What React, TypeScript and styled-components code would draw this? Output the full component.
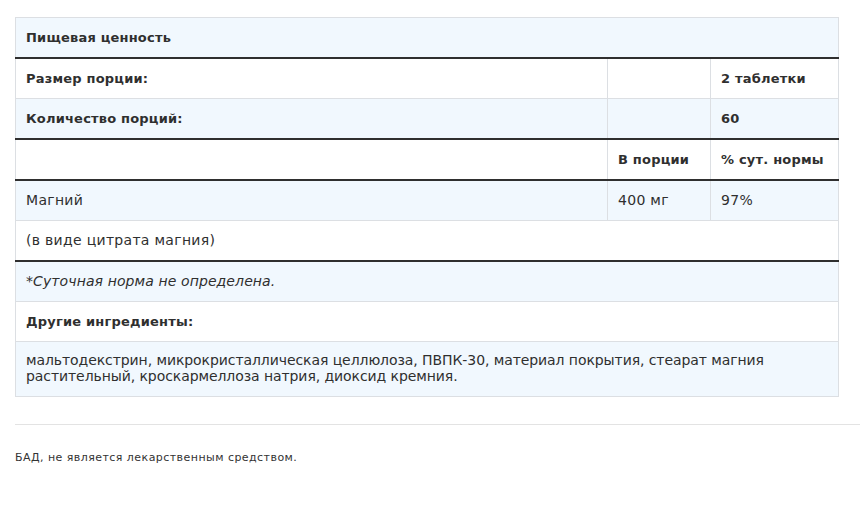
import React from "react";
import styled, { createGlobalStyle } from "styled-components";

const Global = createGlobalStyle`
  html, body { margin: 0; padding: 0; background: #fff; }
  body { font-family: "DejaVu Sans", "Open Sans", sans-serif; color: #2f2f2f; }
`;

const Page = styled.div`
  padding: 17px 0 0 15px;
`;

const Table = styled.table`
  width: 824px;
  border-collapse: collapse;
  border: 1px solid #dcdfe3;
  line-height: 19px;
`;

const Row = styled.tr<{ $blue?: boolean; $thick?: boolean }>`
  background: ${(p) => (p.$blue ? "#f1f8fe" : "#ffffff")};
  border-bottom: ${(p) => (p.$thick ? "2px solid #2f2f2f" : "1px solid #dcdfe3")};
`;

const Cell = styled.td<{ $bold?: boolean; $italic?: boolean; $w?: number }>`
  padding: 10px 10px 10px 10px;
  border-left: 1px solid #dcdfe3;
  font-size: ${(p) => (p.$bold ? "13px" : "14px")};
  letter-spacing: ${(p) => (p.$bold ? "0.2px" : p.$italic ? "0.1px" : "0.3px")};
  font-weight: ${(p) => (p.$bold ? 700 : 400)};
  font-style: ${(p) => (p.$italic ? "italic" : "normal")};
  vertical-align: middle;
  ${(p) => (p.$w ? `width: ${p.$w}px;` : "")}
  &:first-child { border-left: none; }
`;

const Ingredients = styled(Cell)`
  padding: 10px 10px 12px 10px;
  line-height: 16px;
  letter-spacing: -0.08px;
`;

const Rule = styled.hr`
  margin: 27px 0 0 0;
  border: none;
  border-top: 1px solid #e3e3e3;
  height: 0;
`;

const Note = styled.p`
  margin: 26px 0 0 0;
  font-size: 11px;
  letter-spacing: 0.45px;
  line-height: 14px;
  color: #333;
`;

export default function App() {
  return (
    <>
      <Global />
      <Page>
        <Table>
          <tbody>
            <Row $blue $thick>
              <Cell $bold colSpan={3}>Пищевая ценность</Cell>
            </Row>
            <Row>
              <Cell $bold>Размер порции:</Cell>
              <Cell $w={82}></Cell>
              <Cell $bold $w={107}>2 таблетки</Cell>
            </Row>
            <Row $blue $thick>
              <Cell $bold>Количество порций:</Cell>
              <Cell></Cell>
              <Cell $bold>60</Cell>
            </Row>
            <Row $thick>
              <Cell></Cell>
              <Cell $bold>В порции</Cell>
              <Cell $bold>% сут. нормы</Cell>
            </Row>
            <Row $blue>
              <Cell>Магний</Cell>
              <Cell>400 мг</Cell>
              <Cell>97%</Cell>
            </Row>
            <Row $thick>
              <Cell colSpan={3}>(в виде цитрата магния)</Cell>
            </Row>
            <Row $blue>
              <Cell $italic colSpan={3}>*Суточная норма не определена.</Cell>
            </Row>
            <Row>
              <Cell $bold colSpan={3}>Другие ингредиенты:</Cell>
            </Row>
            <Row $blue>
              <Ingredients colSpan={3}>
                мальтодекстрин, микрокристаллическая целлюлоза, ПВПК-30, материал покрытия, стеарат магния
                растительный, кроскармеллоза натрия, диоксид кремния.
              </Ingredients>
            </Row>
          </tbody>
        </Table>
        <Rule />
        <Note>БАД, не является лекарственным средством.</Note>
      </Page>
    </>
  );
}
